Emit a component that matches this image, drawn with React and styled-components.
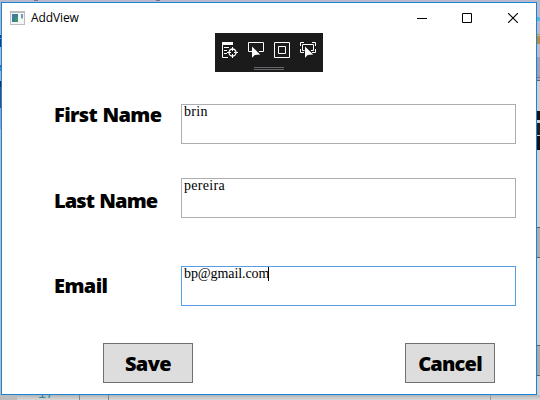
import React from "react";
import styled, { createGlobalStyle } from "styled-components";

const GlobalStyle = createGlobalStyle`
  * { box-sizing: border-box; }
  body { margin: 0; background: #c4c4c4; overflow: hidden; }
`;

const Desktop = styled.div`
  display: grid;
  width: 540px;
  height: 400px;
  grid-template-columns: 1px 536px 3px;
  grid-template-rows: 2px 393px 5px;
  grid-template-areas: "top top top" "left window right" "bottom bottom bottom";
`;

const TopEdge = styled.div`
  grid-area: top;
  background:
    linear-gradient(#777582, #777582) 34px 0 / 4px 1px no-repeat,
    linear-gradient(#777582, #777582) 156px 0 / 4px 1px no-repeat,
    #b9b9cb;
`;

const LeftEdge = styled.div`
  grid-area: left;
  background: linear-gradient(
    #b3b4c4 0 33px, #123d78 33px 36px, #7e9cc6 36px 37px, #123d78 37px 45px,
    #b9b9c6 45px 63px, #4e6384 63px 65px, #3e8cc8 65px 69px, #adb0c4 69px 79px,
    #1c2a50 79px 85px, #4b4b72 85px 106px, #9e9eb6 106px 127px, #bbb 127px
  );
`;

const RightEdge = styled.div`
  grid-area: right;
  background: linear-gradient(
    #b9b9cb 0 15px, #59b6de 15px 19px, #b9b9cb 19px 32px, #c5943c 32px 33px,
    #b9b9cb 33px 34px, #b98d3e 34px 42px, #b9b9cb 42px 55px, #9ea0b4 55px 75px,
    #77777e 75px 76px, #a6a6b0 76px 78px, #66666a 78px 79px, #cfcfcf 79px 109px,
    #121212 109px 118px, #cfcfcf 118px 121px, #202020 121px 133px,
    #cfcfcf 133px 134px, #121212 134px 148px, #cfcfcf 148px 225px,
    #606060 225px 226px, #adadad 226px 255px, #606060 255px 256px,
    #cfcfcf 256px 343px, #606060 343px 344px, #aaa 344px 373px,
    #606060 373px 374px, #cfcfcf 374px
  );
`;

const BottomEdge = styled.div`
  grid-area: bottom;
  display: flex;
  align-items: flex-end;
  padding-left: 38px;
  overflow: hidden;
  color: #2b8ba5;
  font: 13px/15px "Liberation Mono", monospace;
  background:
    linear-gradient(#858585, #858585) 79px 0 / 1px 5px no-repeat,
    linear-gradient(#858585, #858585) 108px 0 / 1px 5px no-repeat,
    linear-gradient(#999, #999) 490px 0 / 1px 5px no-repeat,
    linear-gradient(90deg, #bcbcbc 0 17px, transparent 17px),
    linear-gradient(#b5b5b5, #d8d8d8);
`;

const LineNumber = styled.span`
  margin-bottom: -2px;
`;

const Window = styled.main`
  grid-area: window;
  display: flex;
  flex-direction: column;
  border: 1px solid #1883d7;
  background: #fff;
`;

const TitleBar = styled.header`
  display: flex;
  align-items: center;
  height: 30px;
  padding-left: 8px;
`;

const Title = styled.h1`
  flex: 1;
  margin: 0 0 0 6px;
  font: 400 12px/16px "Open Sans", sans-serif;
  letter-spacing: -0.1px;
  color: #000;
`;

const CaptionButton = styled.button`
  display: grid;
  place-items: center;
  width: ${(p) => p.$width}px;
  height: 29px;
  padding: 0;
  border: 0;
  background: none;
`;

const Icon = styled.svg`
  display: block;
  fill: none;
`;

const DebugBar = styled.div`
  display: flex;
  flex-wrap: wrap;
  justify-content: center;
  gap: 0 10px;
  width: 108px;
  height: 39px;
  margin-left: 213px;
  padding-top: 9px;
  background: #1b1b1c;
`;

const Grip = styled.span`
  width: 30px;
  height: 3px;
  margin-top: 7px;
  border: solid #68686c;
  border-width: 1px 0;
`;

const Form = styled.form`
  display: flex;
  flex-direction: column;
  padding-top: 32px;
`;

const Field = styled.label`
  display: grid;
  grid-template-columns: 127px 335px;
  height: 40px;
  margin: 0 0 ${(p) => p.$after}px 52px;
`;

const Caption = styled.span`
  padding-top: ${(p) => p.$drop}px;
  font: 800 20px/22px "Open Sans", sans-serif;
  letter-spacing: ${(p) => p.$track}px;
  word-spacing: 1px;
  white-space: nowrap;
  color: #000;
`;

const TextBox = styled.span`
  display: flex;
  padding: 0 0 0 2px;
  border: 1px solid ${(p) => (p.$focused ? "#569de5" : "#abadb3")};
  font: 14px/13px "Liberation Serif", serif;
  letter-spacing: ${(p) => p.$track}px;
  color: #000;
`;

const Caret = styled.i`
  width: 1px;
  height: 14px;
  margin-left: -1px;
  background: #000;
`;

const Actions = styled.div`
  display: flex;
  justify-content: space-between;
  width: 392px;
  margin-left: 101px;
`;

const ActionButton = styled.button`
  width: 90px;
  height: 40px;
  padding: 1px 0 0;
  border: 1px solid #707070;
  background: #ddd;
  color: #000;
  font: 800 20px/22px "Open Sans", sans-serif;
  letter-spacing: ${(p) => p.$track}px;
`;

const AppIcon = () => (
  <Icon width="15" height="14" viewBox="0 0 15 14" shapeRendering="crispEdges">
    <path d="M0 0h15v14H0z" fill="#b9bdc0" />
    <path d="M1 2h13v11H1z" fill="#f3f5f6" />
    <path d="M2 3h6v8H2z" fill="#357f91" />
    <path d="M2 3h3v3H2z" fill="#4776a4" />
    <path d="M5 6h3v5H5z" fill="#3e9270" />
    <path d="M11 3h2v4h-2z" fill="#6d9db5" />
    <path d="M11 7h2v1h-2z" fill="#b7d5c3" />
  </Icon>
);

const Cursor = ({ x, y }) => (
  <path transform={`translate(${x} ${y})`} d="M0 0v11.200l2.800-2.700 5.400-.5z" fill="#fff" />
);

const TreeIcon = () => (
  <Icon width="16" height="16" viewBox="0 0 16 16">
    <path d="M0 0h11v3H0z" fill="#fff" />
    <path d="M.5 2v13.500H6M2 5.500h5M2 8.500h3M2 11.500h3" stroke="#fff" />
    <circle cx="10.5" cy="10.5" r="3.5" stroke="#fff" strokeWidth="1.3" />
    <path d="M10.500 5v4M10.500 12v4M5 10.500h4M12 10.500h4" stroke="#fff" />
  </Icon>
);

const SelectIcon = () => (
  <Icon width="16" height="16" viewBox="0 0 16 16">
    <path d="M4 9.500H.5v-9h15v9H11" stroke="#fff" />
    <Cursor x={4} y={4.5} />
  </Icon>
);

const LayoutIcon = () => (
  <Icon width="16" height="16" viewBox="0 0 16 16" stroke="#fff">
    <path d="M.5.5h15v15H.5zM4.500 4.500h7v7h-7z" />
  </Icon>
);

const FocusIcon = () => (
  <Icon width="16" height="16" viewBox="0 0 16 16">
    <path d="M.5 4V.5H4M12 .5h3.500V4M.5 7v3.500H4M12 10.500h3.500V7M4.500 8.500h-2v-6h11v6H11" stroke="#fff" />
    <Cursor x={5} y={4.5} />
  </Icon>
);

export default function App() {
  return (
    <>
      <GlobalStyle />
      <Desktop>
        <TopEdge />
        <LeftEdge />
        <Window>
          <TitleBar>
            <AppIcon />
            <Title>AddView</Title>
            <CaptionButton type="button" aria-label="Minimize" $width={44}>
              <Icon width="10" height="10"><path d="M0 5.500h10" stroke="#000" /></Icon>
            </CaptionButton>
            <CaptionButton type="button" aria-label="Maximize" $width={46}>
              <Icon width="10" height="10"><path d="M.5.5h9v9h-9z" stroke="#000" /></Icon>
            </CaptionButton>
            <CaptionButton type="button" aria-label="Close" $width={46}>
              <Icon width="10" height="10"><path d="M0 0l10 10M10 0L0 10" stroke="#000" strokeWidth="1.1" /></Icon>
            </CaptionButton>
          </TitleBar>
          <DebugBar>
            <TreeIcon />
            <SelectIcon />
            <LayoutIcon />
            <FocusIcon />
            <Grip />
          </DebugBar>
          <Form>
            <Field $after={34}>
              <Caption $drop={0} $track={-0.65}>First Name</Caption>
              <TextBox $track={0.3}>brin</TextBox>
            </Field>
            <Field $after={48}>
              <Caption $drop={12} $track={-0.9}>Last Name</Caption>
              <TextBox $track={0.3}>pereira</TextBox>
            </Field>
            <Field $after={37}>
              <Caption $drop={9} $track={-0.6}>Email</Caption>
              <TextBox $focused $track={-0.1}>bp@gmail.com<Caret /></TextBox>
            </Field>
            <Actions>
              <ActionButton type="button" $track={-0.6}>Save</ActionButton>
              <ActionButton type="button" $track={-0.8}>Cancel</ActionButton>
            </Actions>
          </Form>
        </Window>
        <RightEdge />
        <BottomEdge><LineNumber>17</LineNumber></BottomEdge>
      </Desktop>
    </>
  );
}
